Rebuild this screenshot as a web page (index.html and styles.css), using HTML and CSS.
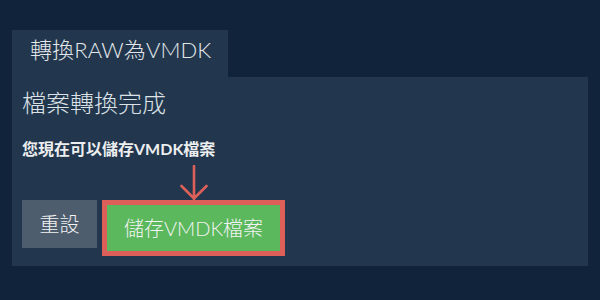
FILE: index.html
```html
<!DOCTYPE html>
<html lang="zh-Hant">
<head>
<meta charset="utf-8">
<title>轉換RAW為VMDK</title>
<link rel="stylesheet" href="styles.css">
</head>
<body>
<div class="page">
  <div class="tab">轉換RAW為VMDK</div>
  <div class="panel">
    <h1 class="title">檔案轉換完成</h1>
    <p class="note">您現在可以儲存VMDK檔案</p>
    <div class="actions">
      <button class="btn btn-reset">重設</button>
      <button class="btn btn-save">儲存VMDK檔案
        <svg class="arrow" width="28" height="37" viewBox="0 0 28 37" aria-hidden="true">
          <path d="M14 1 V34 M1.5 21 L14 33.5 L26.5 21" fill="none" stroke="#dc5f5a" stroke-width="2.6" stroke-linecap="round" stroke-linejoin="round"/>
        </svg>
      </button>
    </div>
  </div>
</div>
</body>
</html>
```
FILE: styles.css
```css
html, body {
  margin: 0;
  padding: 0;
}
body {
  background: #10233a;
  font-family: Lato, "Noto Sans CJK TC", sans-serif;
  color: #e6e9ec;
  width: 600px;
  height: 300px;
  overflow: hidden;
}
.page {
  padding: 30px 12px 0 12px;
}
.tab {
  display: inline-block;
  vertical-align: top;
  background: #22374d;
  height: 47px;
  box-sizing: border-box;
  padding: 5px 17px 0 18px;
  line-height: 30px;
  font-size: 22px;
  font-weight: 300;
  letter-spacing: 0.1px;
  color: #e3e7eb;
}
.panel {
  background: #22374d;
  padding: 10px 10px 10px 10px;
}
.title {
  margin: 0;
  font-size: 24px;
  font-weight: 300;
  line-height: 32px;
  color: #dde2e7;
}
.note {
  margin: 20px 0 0 0;
  font-size: 16px;
  font-weight: 700;
  line-height: 20px;
  color: #eceef0;
}
.actions {
  display: flex;
  align-items: flex-start;
  gap: 5px;
  margin-top: 41px;
}
.btn {
  font-family: Lato, "Noto Sans CJK TC", sans-serif;
  font-size: 20px;
  font-weight: 300;
  color: #f2f4f5;
  border: 0;
  padding: 0;
  margin: 0;
  cursor: pointer;
  line-height: 1;
}
.btn-reset {
  width: 75px;
  height: 48px;
  background: #4e5d6d;
}
.btn-save {
  position: relative;
  width: 183px;
  height: 56px;
  background: #5cb85c;
  border: 5px solid #dc5f5a;
  box-sizing: border-box;
}
.arrow {
  position: absolute;
  left: 50%;
  bottom: 100%;
  margin-left: -14px;
  margin-bottom: 3px;
  display: block;
}
```
